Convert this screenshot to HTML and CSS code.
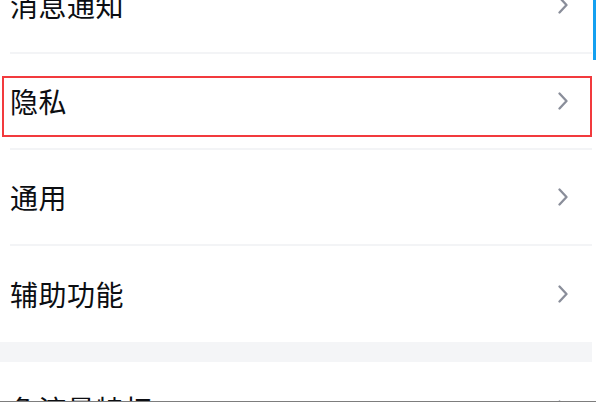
FILE: index.html
```html
<!DOCTYPE html>
<html lang="zh-CN">
<head>
<meta charset="utf-8">
<title>设置</title>
<link rel="stylesheet" href="styles.css">
</head>
<body>
<div class="window">
  <div class="viewport">
    <div class="list">
      <div class="row"><span class="label">消息通知</span><svg class="chev" viewBox="0 0 10 18"><path d="M1.5 1.5 L8.5 9 L1.5 16.5"/></svg></div>
      <div class="row"><span class="label">隐私</span><svg class="chev" viewBox="0 0 10 18"><path d="M1.5 1.5 L8.5 9 L1.5 16.5"/></svg></div>
      <div class="row"><span class="label">通用</span><svg class="chev" viewBox="0 0 10 18"><path d="M1.5 1.5 L8.5 9 L1.5 16.5"/></svg></div>
      <div class="row last"><span class="label">辅助功能</span><svg class="chev" viewBox="0 0 10 18"><path d="M1.5 1.5 L8.5 9 L1.5 16.5"/></svg></div>
      <div class="gap"></div>
      <div class="row"><span class="label">免流量特权</span><svg class="chev" viewBox="0 0 10 18"><path d="M1.5 1.5 L8.5 9 L1.5 16.5"/></svg></div>
    </div>
    <div class="track"></div>
  </div>
  <div class="scrollbar"></div>
  <div class="highlight"></div>
</div>
</body>
</html>
```
FILE: styles.css
```css
html, body {
  margin: 0;
  padding: 0;
  background: #ffffff;
}
body {
  width: 596px;
  height: 406px;
  overflow: hidden;
  font-family: "Noto Sans CJK SC", "Noto Sans", sans-serif;
}
.window {
  position: relative;
  width: 596px;
  height: 406px;
}
.viewport {
  display: flex;
  height: 402px;
  overflow: hidden;
  border-bottom: 1.5px solid #7d7d7d;
  box-sizing: border-box;
}
.list {
  width: 592px;
  margin-top: -42px;
  flex: none;
}
.track {
  flex: 1;
  background: #ffffff;
}
.row {
  margin-left: 10px;
  height: 94px;
  border-bottom: 2px solid #f3f4f6;
  display: flex;
  align-items: center;
  justify-content: space-between;
  padding-right: 24px;
}
.row.last {
  height: 96px;
  border-bottom: none;
}
.label {
  font-size: 28px;
  font-weight: 400;
  color: #0c0e12;
  line-height: 1;
  letter-spacing: 0.5px;
}
.chev {
  width: 10px;
  height: 18px;
}
.chev path {
  fill: none;
  stroke: #8a8e9a;
  stroke-width: 2.3;
  stroke-linecap: round;
  stroke-linejoin: round;
}
.gap {
  height: 20px;
  background: #f4f5f7;
}
.scrollbar {
  position: absolute;
  left: 593px;
  top: 0;
  width: 3px;
  height: 60px;
  background: #14a0f0;
}
.highlight {
  position: absolute;
  left: 2px;
  top: 76px;
  width: 590px;
  height: 61px;
  box-sizing: border-box;
  border: 2.5px solid #f23a3d;
}
```
